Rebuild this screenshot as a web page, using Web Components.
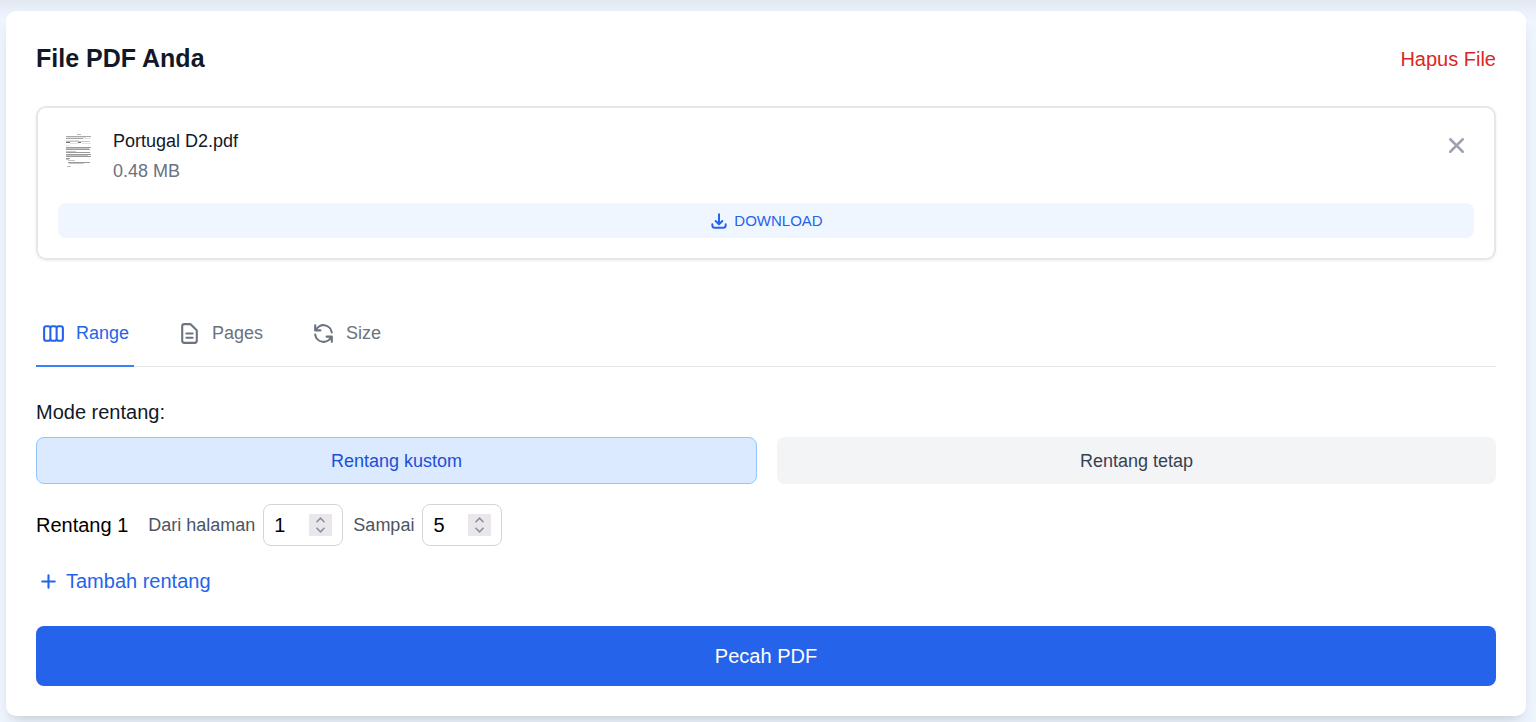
<!DOCTYPE html>
<html lang="id">
<head>
<meta charset="utf-8">
<meta name="viewport" content="width=device-width, initial-scale=1">
<title>Pecah PDF</title>
<style>
  body {
    margin: 0;
    font: 20px/30px "Liberation Sans", Arial, sans-serif;
    color: #111827;
    background: linear-gradient(rgba(0,0,0,.06), rgba(0,0,0,.02) 12px, transparent 20px), #eff6ff;
  }
</style>
</head>
<body>
<split-page></split-page>
<script>
const base = `<style>
  *, ::before, ::after { box-sizing: border-box; }
  button, input { font: inherit; color: inherit; background: none; border: 0; padding: 0; margin: 0; }
  button { cursor: pointer; }
</style>`;

const define = (name, html) => {
  const template = document.createElement('template');
  template.innerHTML = base + html;
  customElements.define(name, class extends HTMLElement {
    constructor() {
      super();
      this.attachShadow({ mode: 'open' }).append(template.content.cloneNode(true));
    }
  });
};

const icons = {
  close: 'M6 18L18 6M6 6l12 12',
  plus: 'M12 6v6m0 0v6m0-6h6m-6 0H6',
  download: 'M4 16v1a3 3 0 003 3h10a3 3 0 003-3v-1m-4-4l-4 4m0 0l-4-4m4 4V4',
  range: 'M9 17V7m0 10a2 2 0 01-2 2H5a2 2 0 01-2-2V7a2 2 0 012-2h2a2 2 0 012 2m0 10a2 2 0 002 2h2a2 2 0 002-2M9 7a2 2 0 012-2h2a2 2 0 012 2m0 10V7m0 10a2 2 0 002 2h2a2 2 0 002-2V7a2 2 0 00-2-2h-2a2 2 0 00-2 2',
  pages: 'M9 12h6m-6 4h6m2 5H7a2 2 0 01-2-2V5a2 2 0 012-2h5.586a1 1 0 01.707.293l5.414 5.414a1 1 0 01.293.707V19a2 2 0 01-2 2z',
  size: 'M4 4v5h.582m15.356 2A8.001 8.001 0 004.582 9m0 0H9m11 11v-5h-.581m0 0a8.003 8.003 0 01-15.357-2m15.357 2H15'
};
customElements.define('line-icon', class extends HTMLElement {
  constructor() {
    super();
    this.attachShadow({ mode: 'open' });
  }
  connectedCallback() {
    this.shadowRoot.innerHTML = `<style>
      :host { display: block; flex: none; width: 25px; height: 25px; }
      svg { display: block; width: 100%; height: 100%; fill: none; stroke: currentColor; stroke-width: 2; stroke-linecap: round; stroke-linejoin: round; }
      :host([name=close]) svg, :host([name=download]) svg { stroke-width: 2.4; }
    </style><svg viewBox="0 0 24 24" aria-hidden="true"><path d="${icons[this.getAttribute('name')]}"/></svg>`;
  }
});

define('page-thumbnail', `<style>
  :host { display: block; flex: none; width: 40px; height: 45px; }
  svg { display: block; }
</style>
<svg width="40" height="45" viewBox="0 0 40 45" aria-hidden="true" fill="none" opacity=".85">
  <path stroke="#aaa" d="M19 6.500h4"/>
  <path stroke="#999" d="M8 8.500h25M8 10.500h17"/>
  <path stroke="#ddd" d="M8 9.500h20M25 10.500h8M8 12.500h13"/>
  <path stroke="#bbb" d="M8 13.500h24"/>
  <path stroke="#555" d="M8 14.500h4M20 14.500h3"/>
  <path stroke="#ddd" d="M12 15.500h8M24 15.500h9M8 17.500h4"/>
  <path stroke="#888" d="M8 19.500h25M8 21.500h24M8 24.500h24M8 26.500h25"/>
  <path stroke="#bbb" d="M8 20.500h23M8 23.500h10M8 27.500h22"/>
  <path stroke="#888" d="M8 28.500h25M8 30.500h4M10 34.500h22"/>
  <path stroke="#bbb" d="M8 31.500h3M10 32.500h7M11 35.500h15"/>
  <path stroke="#bbb" d="M9 38.500h4"/>
</svg>`);

define('file-item', `<style>
  :host { display: block; padding: 20px; border: 2px solid #e5e7eb; border-radius: 10px; box-shadow: 0 1px 3px rgba(0,0,0,.07); font-size: 18px; line-height: 27px; }
  .row { display: flex; gap: 15px; margin-bottom: 18px; }
  .info { flex: 1; display: grid; gap: 3px; }
  .size { color: #6b7280; }
  .close { align-self: start; padding: 5px; color: #9ca3af; }
  .download { display: flex; width: 100%; justify-content: center; align-items: center; gap: 5px; padding: 5px; border-radius: 8px; background: #eff6ff; color: #2563eb; font-size: 15px; line-height: 25px; }
  .download line-icon { width: 20px; height: 20px; }
</style>
<div class="row">
  <page-thumbnail></page-thumbnail>
  <div class="info"><div><slot></slot></div><div class="size"><slot name="size"></slot></div></div>
  <button class="close" aria-label="Hapus"><line-icon name="close"></line-icon></button>
</div>
<button class="download"><line-icon name="download"></line-icon>DOWNLOAD</button>`);

define('tab-item', `<style>
  :host { display: block; }
  button { display: flex; align-items: center; gap: 10px; padding: 20px 5px 18px; border-bottom: 2px solid transparent; color: #6b7280; font-size: 18px; line-height: 27px; }
  :host([active]) button { border-color: #3b82f6; color: #2563eb; }
</style>
<button><slot name="icon"></slot><slot></slot></button>`);

define('tab-list', `<style>
  :host { display: flex; gap: 38px; box-shadow: inset 0 -1px #e5e7eb; }
</style><slot></slot>`);

define('mode-picker', `<style>
  :host { display: flex; flex-wrap: wrap; gap: 10px 20px; }
  h3 { flex: 0 0 100%; margin: 0; font-size: 20px; font-weight: 400; }
  button { flex: 1; padding: 11px 10px 9px; border-radius: 8px; background: #f3f4f6; color: #374151; font-size: 18px; line-height: 27px; }
  button[aria-pressed=true] { border: 1px solid #93c5fd; background: #dbeafe; color: #1d4ed8; padding: 10px 10px 8px; }
</style>
<h3>Mode rentang:</h3>
<button aria-pressed="true">Rentang kustom</button>
<button aria-pressed="false">Rentang tetap</button>`);

customElements.define('page-field', class extends HTMLElement {
  constructor() {
    super();
    this.attachShadow({ mode: 'open' }).innerHTML = base + `<style>
      :host { display: block; }
      div { display: flex; align-items: center; gap: 8px; }
      label { color: #4b5563; font-size: 18px; }
      .field { width: 80px; gap: 0; padding: 5px 10px; border: 1px solid #d1d5db; border-radius: 8px; }
      input { flex: 1; min-width: 0; height: 30px; color: #000; outline: 0; appearance: textfield; }
      input::-webkit-inner-spin-button { appearance: none; }
      svg { flex: none; background: #e9e7ec; }
    </style>
    <div><label for="page"><slot></slot></label>
      <div class="field"><input id="page" type="number" min="1" value="${this.getAttribute('value')}">
        <svg width="23" height="22" viewBox="0 0 23 22" aria-hidden="true" fill="none" stroke="#8f8f9d" stroke-width="1.600"><path d="M7.500 8.200l4-4 4 4M7.500 13.800l4 4 4-4"/></svg>
      </div></div>`;
  }
});

define('range-row', `<style>
  :host { display: flex; align-items: center; gap: 10px; }
  .name { color: #000; margin-right: 10px; }
</style>
<span class="name"><slot></slot></span>
<page-field value="1">Dari halaman</page-field>
<page-field value="5">Sampai</page-field>`);

define('split-page', `<style>
  :host { display: block; padding: 11px 10px 6px 6px; }
  main { padding: 30px; border-radius: 10px; background: #fff; box-shadow: 0 12px 19px -4px rgba(0,0,0,.1), 0 5px 8px -5px rgba(0,0,0,.1); }
  header { display: flex; justify-content: space-between; align-items: center; margin-bottom: 30px; }
  h2 { margin: 0; font-size: 25px; line-height: 35px; }
  .remove { color: #dc2626; }
  tab-list { margin: 40px 0 30px; }
  range-row { margin: 20px 0; }
  .add { display: flex; align-items: center; gap: 5px; color: #2563eb; }
  .submit { display: block; width: 100%; margin-top: 30px; padding: 15px; border-radius: 8px; background: #2563eb; color: #fff; }
</style>
<main>
  <header><h2>File PDF Anda</h2><button class="remove">Hapus File</button></header>
  <file-item>Portugal D2.pdf<span slot="size">0.48 MB</span></file-item>
  <tab-list>
    <tab-item active><line-icon slot="icon" name="range"></line-icon>Range</tab-item>
    <tab-item><line-icon slot="icon" name="pages"></line-icon>Pages</tab-item>
    <tab-item><line-icon slot="icon" name="size"></line-icon>Size</tab-item>
  </tab-list>
  <mode-picker></mode-picker>
  <range-row>Rentang 1</range-row>
  <button class="add"><line-icon name="plus"></line-icon>Tambah rentang</button>
  <button class="submit">Pecah PDF</button>
</main>`);
</script>
</body>
</html>
